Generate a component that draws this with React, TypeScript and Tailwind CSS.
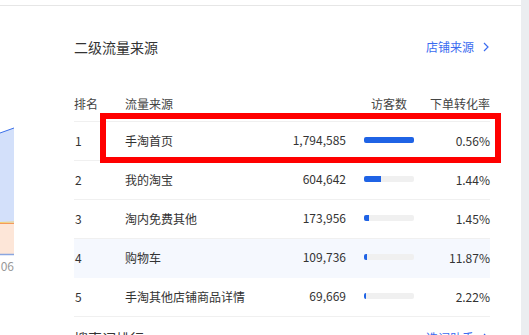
import React from "react";

const rows = [
  { rank: 1, name: "手淘首页", uv: "1,794,585", bar: 50, pct: "0.56%", hl: false },
  { rank: 2, name: "我的淘宝", uv: "604,642", bar: 17, pct: "1.44%", hl: false },
  { rank: 3, name: "淘内免费其他", uv: "173,956", bar: 5, pct: "1.45%", hl: false },
  { rank: 4, name: "购物车", uv: "109,736", bar: 3, pct: "11.87%", hl: true },
  { rank: 5, name: "手淘其他店铺商品详情", uv: "69,669", bar: 2, pct: "2.22%", hl: false },
];

function Chevron() {
  return (
    <svg width="6" height="10" viewBox="0 0 6 10" className="ml-[9px]">
      <path d="M1 1 L5 5 L1 9" fill="none" stroke="#3b6cf0" strokeWidth="1.2" />
    </svg>
  );
}

export default function App() {
  return (
    <div className="relative w-[529px] h-[335px] overflow-hidden bg-white font-['Noto_Sans_CJK_SC',sans-serif] text-[#333]">
      <div className="flex h-full">
        <div className="w-[521px] flex flex-col">
          <div className="h-[6px] border-b border-[#e6e6e6] shrink-0" />
          <div className="flex flex-1">
            <div className="w-[14px] shrink-0">
              <svg width="14" height="329" viewBox="0 6 14 329">
                <path d="M0 133 L14 128 L14 223 L0 223 Z" fill="#d3e0fa" />
                <path d="M0 133 L14 128" stroke="#3a6fe8" strokeWidth="1" fill="none" />
                <path d="M0 224 L14 224 L14 254 L0 254 Z" fill="#fde6d8" />
                <path d="M0 222.5 L14 222" stroke="#f6cf6c" strokeWidth="1" />
                <path d="M0 223.5 L14 223.5" stroke="#f59a5a" strokeWidth="1" />
                <path d="M0 254.5 L14 254.5" stroke="#8aa6e0" strokeWidth="1.5" />
                <text x="14" y="271" textAnchor="end" fontSize="12" fill="#999" fontFamily="Noto Sans CJK SC, sans-serif">06</text>
              </svg>
            </div>
            <div className="ml-[60px] w-[416px] pt-[31px] flex flex-col">
              <div className="h-[20px] flex items-center justify-between">
                <span className="text-[14px] leading-[20px] text-[#333]">二级流量来源</span>
                <span className="flex items-center text-[12px] text-[#3b6cf0] mr-[1px]">
                  店铺来源
                  <Chevron />
                </span>
              </div>
              <div className="mt-[29px] h-[36px] border-b border-[#f0f0f0] flex items-center text-[12px] text-[#444]">
                <span className="w-[51px]">排名</span>
                <span className="flex-1">流量来源</span>
                <span className="w-[158px] text-right pr-[7px]">访客数</span>
                <span className="w-[76px] text-right">下单转化率</span>
              </div>
              {rows.map((r) => (
                <div
                  key={r.rank}
                  className={
                    "h-[39px] border-b flex items-center text-[12px] " +
                    (r.hl ? "bg-[#f5f8fe] border-[#f5f8fe]" : "border-[#f0f0f0]")
                  }
                >
                  <span className="w-[51px] pl-[1px]">{r.rank}</span>
                  <span className="flex-1">{r.name}</span>
                  <span className="w-[90px] text-right -mt-[2px]">{r.uv}</span>
                  <div className="ml-[18px] w-[50px] h-[6px] rounded-[2px] bg-[#f0f0f0] overflow-hidden -mt-[3px]">
                    <div className="h-full bg-[#1f63e5]" style={{ width: r.bar }} />
                  </div>
                  <span className="w-[76px] text-right">{r.pct}</span>
                </div>
              ))}
              <div className="mt-[11px] h-[20px] flex items-center justify-between">
                <span className="text-[14px] leading-[20px] text-[#333]">搜索词排行</span>
                <span className="flex items-center text-[12px] text-[#3b6cf0] mr-[1px]">
                  选词助手
                  <Chevron />
                </span>
              </div>
            </div>
          </div>
        </div>
        <div className="w-[8px] bg-[#ebedf0]" />
      </div>
      <div className="absolute left-[100px] top-[113px] w-[401px] h-[50px] border-[6px] border-[#ff0000]" />
    </div>
  );
}
